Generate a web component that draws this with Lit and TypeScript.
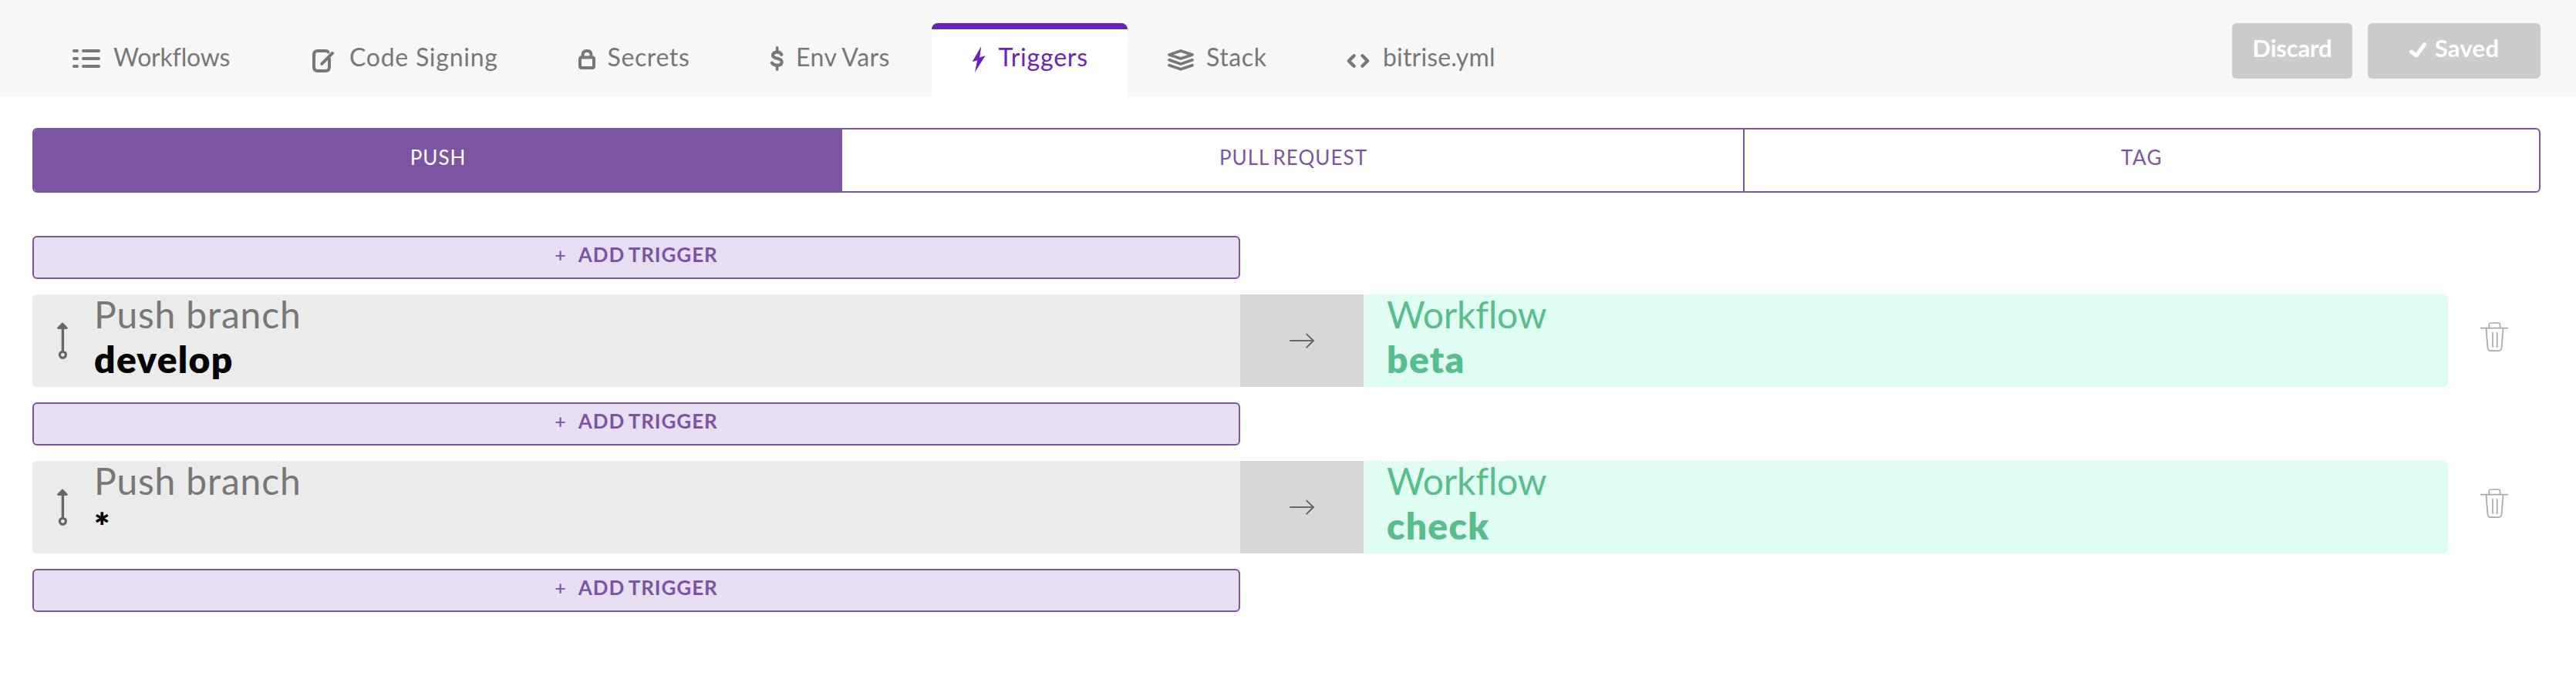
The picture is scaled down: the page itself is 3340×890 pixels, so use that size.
import { LitElement, html, css, svg } from "lit";
import { customElement, property, state } from "lit/decorators.js";
import { classMap } from "lit/directives/class-map.js";

const icons = {
  workflows: svg`<svg width="36" height="34" viewBox="0 0 36 34"><path d="M2 6h4M14 6h20M2 16h4M14 16h20M2 26h4M14 26h20"/></svg>`,
  signing: svg`<svg width="29" height="34" viewBox="0 0 29 34"><path d="M20.5 7.5 Q19.5 6 17 6H7Q2 6 2 11V27Q2 32 7 32H17Q22 32 22 27V16M12.2 22.8 26 9" /></svg>`,
  secrets: svg`<svg width="22" height="34" viewBox="0 0 22 34"><rect x="2" y="14.5" width="18" height="13.5" rx="2"/><path d="M5.5 14V11.5Q5.5 6 11 6T16.5 11.5V14"/></svg>`,
  envs: svg`<svg width="18" height="34" viewBox="0 0 18 34"><path d="M14.3 10.8C13 8.3 11 7.6 8.6 7.6 5.2 7.6 3 9.2 3 11.8 3 17.3 14.6 14.2 14.6 20.4 14.6 23.2 12.2 24.7 8.6 24.7 5.6 24.7 3.4 23.8 2 21.6" stroke-width="4.2"/><path d="M8.6 1.8V6M8.6 26V30.2" stroke-width="3.6"/></svg>`,
  triggers: svg`<svg width="18" height="34" viewBox="0 0 18 34"><path class="solid" d="M12.2 0 .6 20.3 7.2 18.2 3.9 34 17.6 12.2 10.2 14.6Z"/></svg>`,
  stack: svg`<svg width="34" height="34" viewBox="0 0 34 34"><path stroke-width="3.7" d="M17 5.9 32 11 17 16.1 2 11ZM2.1 17.8 17 22.9 31.9 17.8M2.1 24.7 17 29.8 31.9 24.7"/></svg>`,
  yml: svg`<svg width="30" height="34" viewBox="0 0 30 34"><path stroke-width="4.3" d="M9.6 12.2 2.8 19 9.6 25.8M20.4 12.2 27.2 19 20.4 25.8"/></svg>`,
};

type TabId = keyof typeof icons;

const tabs: { id: TabId; label: string }[] = [
  { id: "workflows", label: "Workflows" },
  { id: "signing", label: "Code Signing" },
  { id: "secrets", label: "Secrets" },
  { id: "envs", label: "Env Vars" },
  { id: "triggers", label: "Triggers" },
  { id: "stack", label: "Stack" },
  { id: "yml", label: "bitrise.yml" },
];

@customElement("editor-nav")
class EditorNav extends LitElement {
  @state() private active: TabId = "triggers";

  static styles = css`
    :host { display: block; }
    .bar { display: flex; align-items: flex-start; height: 126px; box-sizing: border-box; padding: 30px 46px 0 42px; background: #f7f7f7; }
    .tabs { display: flex; flex: 1; height: 96px; }
    .tab { display: flex; align-items: flex-start; box-sizing: border-box; height: 96px; padding: 22px 0 0 52px; border-top: 8px solid transparent; border-radius: 8px 8px 0 0; color: #777; cursor: pointer; }
    .tab.active { background: #fff; border-top-color: #6b24bb; color: #6b24bb; }
    .icon { height: 34px; flex: none; }
    svg { display: block; fill: none; stroke: currentColor; stroke-width: 4; stroke-linecap: round; stroke-linejoin: round; overflow: visible; }
    .solid { fill: currentColor; stroke: none; }
    .label { font-size: 32px; line-height: 39px; margin-top: -6px; white-space: nowrap; }
    .workflows { width: 311px; } .workflows .icon { width: 53px; } .workflows .label { letter-spacing: -0.19px; }
    .signing { width: 345px; } .signing .icon { width: 48px; } .signing .label { letter-spacing: 0.74px; }
    .secrets { width: 249px; } .secrets .icon { width: 37.5px; } .secrets .label { letter-spacing: 0.62px; }
    .envs { width: 261px; } .envs .icon { width: 33px; } .envs .label { letter-spacing: 0.5px; word-spacing: -1px; }
    .triggers { width: 254px; } .triggers .icon { width: 34.5px; } .triggers .label { letter-spacing: 0.8px; }
    .stack { width: 232px; } .stack .icon { width: 50px; } .stack .label { letter-spacing: 0.6px; }
    .yml { width: 294px; } .yml .icon { width: 47px; } .yml .label { letter-spacing: 0.17px; }
    .actions { display: flex; gap: 20px; }
    .btn { display: flex; justify-content: center; box-sizing: border-box; height: 72px; padding-top: 13px; border-radius: 6px; background: #ccc; color: #fff; font-size: 31px; line-height: 38px; font-weight: 700; }
    .discard { width: 156px; letter-spacing: -0.2px; }
    .saved { width: 224px; gap: 11px; letter-spacing: 0.3px; }
    .saved svg { margin-top: 11px; stroke-width: 5; }
  `;

  render() {
    return html`<div class="bar">
      <div class="tabs">
        ${tabs.map(
          (t) => html`<div class=${classMap({ tab: true, [t.id]: true, active: t.id === this.active })} @click=${() => (this.active = t.id)}>
            <span class="icon">${icons[t.id]}</span><span class="label">${t.label}</span>
          </div>`
        )}
      </div>
      <div class="actions">
        <div class="btn discard">Discard</div>
        <div class="btn saved"><svg width="22" height="22" viewBox="0 0 22 22"><path d="M2.6 13.2 9 18 19.5 3.6" /></svg><span>Saved</span></div>
      </div>
    </div>`;
  }
}

@customElement("trigger-row")
class TriggerRow extends LitElement {
  @property() branch = "";
  @property() workflow = "";

  static styles = css`
    :host { display: block; }
    .row { display: flex; height: 120px; }
    .source { display: flex; width: 1566px; background: #ebebeb; border-radius: 6px 0 0 6px; }
    .grip { width: 80px; flex: none; }
    .grip svg { margin: 36px 0 0 32px; }
    .into { display: flex; align-items: center; justify-content: center; width: 160px; background: #d7d7d7; }
    .target { width: 1406px; box-sizing: border-box; padding-left: 30px; background: #e0fdf3; color: #58be8e; border-radius: 0 6px 6px 0; }
    .pair { display: flex; flex-direction: column; gap: 1px; margin-top: -3px; font-size: 48px; line-height: 57px; }
    .kind { color: #777; letter-spacing: 0.82px; }
    .target .kind { color: inherit; letter-spacing: -0.2px; }
    .value { font-weight: 800; letter-spacing: 1.3px; }
    .source .value { color: #000; }
    .remove { margin: 35px 0 0 41px; }
    svg { display: block; fill: none; overflow: visible; }
  `;

  render() {
    return html`<div class="row">
      <div class="source">
        <div class="grip">
          <svg width="14" height="48" viewBox="0 0 14 48"><path d="M7.4 8V38" stroke="#676767" stroke-width="3.4" /><path d="M7 1.8 12.6 7.6H1.4Z" fill="#676767" stroke="#676767" stroke-width="2.6" stroke-linejoin="round" /><circle cx="7.4" cy="42.3" r="4" stroke="#676767" stroke-width="3.2" /></svg>
        </div>
        <div class="pair"><span class="kind">Push branch</span><span class="value">${this.branch}</span></div>
      </div>
      <div class="into">
        <svg width="32" height="20" viewBox="0 0 32 20"><path d="M1 10H31M22.2 1.6 31 10 22.2 18.6" stroke="#666" stroke-width="2" stroke-linecap="round" stroke-linejoin="round" /></svg>
      </div>
      <div class="target">
        <div class="pair"><span class="kind">Workflow</span><span class="value">${this.workflow}</span></div>
      </div>
      <svg class="remove" width="38" height="40" viewBox="0 0 38 40"><path d="M1.7 8.6H36.3M12.3 8.6V4Q12.3 2 14.3 2H24.5Q26.5 2 26.5 4V8.6M8.5 8.6 10.4 34Q10.8 38.2 14.8 38.2H24.2Q28.2 38.2 28.6 34L30.5 8.6M17 14.6V33M22.7 14.6V33" stroke="#aaa" stroke-width="1.7" stroke-linecap="round" stroke-linejoin="round" /></svg>
    </div>`;
  }
}

@customElement("app-root")
class AppRoot extends LitElement {
  @state() private triggers = [
    { branch: "develop", workflow: "beta" },
    { branch: "*", workflow: "check" },
  ];

  static styles = css`
    :host { display: block; height: 890px; background: #fff; font-family: Lato, "Liberation Sans", sans-serif; }
    .content { padding: 40px 46px 0 42px; }
    .kinds { display: flex; box-sizing: border-box; height: 84px; border: 2px solid #7b55a1; border-radius: 6px; overflow: hidden; color: #7b55a1; font-size: 26px; line-height: 32px; text-align: center; }
    .seg { box-sizing: border-box; padding-top: 20px; }
    .push { width: 1048px; background: #7b55a1; color: #fff; letter-spacing: 1px; }
    .pull { width: 1170px; border-right: 2px solid #7b55a1; letter-spacing: 1.05px; word-spacing: -3px; padding-left: 2px; }
    .tag { flex: 1; letter-spacing: 1.45px; }
    .list { display: flex; flex-direction: column; gap: 20px; margin-top: 56px; }
    .add { display: flex; justify-content: center; box-sizing: border-box; width: 1566px; height: 56px; padding-top: 6px; gap: 15px; border: 2px solid #7b55a1; border-radius: 6px; background: #e7def2; color: #7b55a1; font-size: 26px; line-height: 32px; font-weight: 700; letter-spacing: 0.95px; word-spacing: -2px; }
    .plus { font-size: 25px; font-weight: 500; }
  `;

  private addButton() {
    return html`<div class="add"><span class="plus">+</span><span>ADD TRIGGER</span></div>`;
  }

  render() {
    return html`<editor-nav></editor-nav>
      <div class="content">
        <div class="kinds">
          <div class="seg push">PUSH</div>
          <div class="seg pull">PULL REQUEST</div>
          <div class="seg tag">TAG</div>
        </div>
        <div class="list">
          ${this.addButton()}
          ${this.triggers.map((t) => html`<trigger-row .branch=${t.branch} .workflow=${t.workflow}></trigger-row>${this.addButton()}`)}
        </div>
      </div>`;
  }
}
